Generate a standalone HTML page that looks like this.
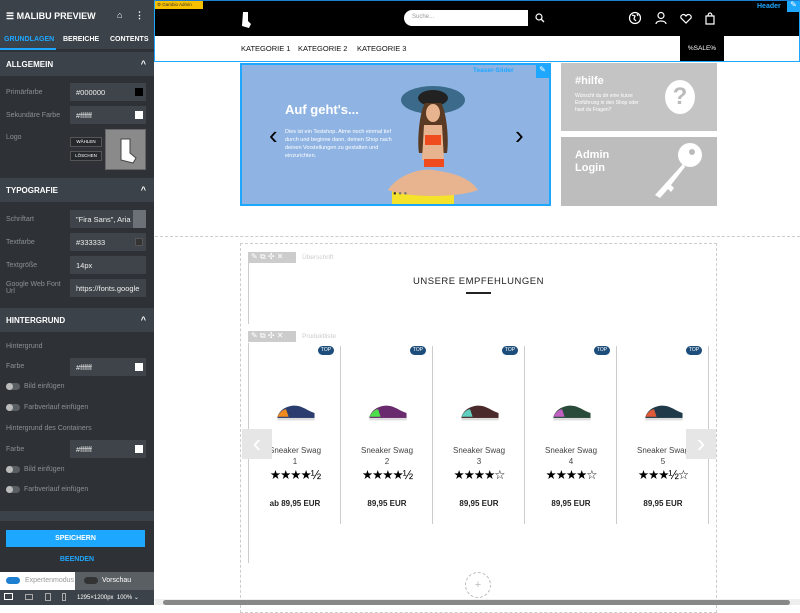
<!DOCTYPE html>
<html><head><meta charset="utf-8"><style>
*{box-sizing:border-box;margin:0;padding:0}
body{width:800px;height:605px;overflow:hidden;position:relative;background:#fff;font-family:"Liberation Sans",sans-serif}
.a{position:absolute}
#sb{left:0;top:0;width:154px;height:605px;background:#2e3236;color:#ddd;font-size:7px}
.hd{position:absolute;left:0;width:154px;height:24px;background:#3c4249;color:#fff;font-weight:bold;font-size:8px;padding:8px 6px}
.hd:after{content:"^";position:absolute;right:8px;top:7px;font-size:9px}
.lb{position:absolute;left:6px;color:#8a9096;font-size:7px}
.in{position:absolute;left:70px;width:76px;height:18px;background:#3e4449;color:#eee;font-size:7.5px;padding:5px 6px}
.sw{position:absolute;right:3px;top:5px;width:8px;height:8px}
.tg{position:absolute;left:6px;width:14px;height:7px;border-radius:4px;background:#5a5f64}
.tg:before{content:"";position:absolute;left:0;top:0;width:7px;height:7px;border-radius:50%;background:#bbb}
.tgl{position:absolute;left:24px;color:#8a9096;font-size:7px}
.pc{position:absolute;top:346px;width:92px;height:178px;border-right:1px solid #ccc;text-align:center;font-family:"Liberation Sans",sans-serif}
.top{position:absolute;right:6px;top:0;width:16px;height:9px;border-radius:5px;background:#1d4e7b;color:#fff;font-size:5px;line-height:9px}
.shoe{position:absolute;left:26px;top:56px;width:42px;height:22px}
.nm{position:absolute;left:0;width:92px;top:99px;font-size:8px;color:#444;line-height:11px}
.st{position:absolute;left:0;width:92px;top:121px;font-size:12.5px;color:#000;letter-spacing:-1px}
.pr{position:absolute;left:0;width:92px;top:153px;font-size:8px;font-weight:bold;color:#222}
.tb{position:absolute;width:48px;height:11px;background:#ccc}
</style></head><body>
<div id="sb" class="a">
 <div class="a" style="left:0;top:0;width:154px;height:32px;background:#3c4249"></div>
 <div class="a" style="left:6px;top:11px;color:#fff;font-weight:bold;font-size:9px">☰ MALIBU PREVIEW</div>
 <div class="a" style="left:117px;top:10px;color:#fff;font-size:9px">⌂</div>
 <div class="a" style="left:135px;top:10px;color:#fff;font-size:9px;font-weight:bold">⋮</div>
 <div class="a" style="left:0;top:32px;width:154px;height:17px;background:#3c4249"></div>
 <div class="a" style="left:4px;top:36px;color:#1ea7ff;font-weight:bold;font-size:7px">GRUNDLAGEN</div>
 <div class="a" style="left:63px;top:36px;color:#fff;font-weight:bold;font-size:7px">BEREICHE</div>
 <div class="a" style="left:110px;top:36px;color:#fff;font-weight:bold;font-size:7px">CONTENTS</div>
 <div class="a" style="left:0;top:48px;width:56px;height:2px;background:#1ea7ff"></div>
 <div class="hd" style="top:52px">ALLGEMEIN</div>
 <div class="lb" style="top:89px">Primärfarbe</div><div class="in" style="top:83px">#000000<span class="sw" style="background:#000"></span></div>
 <div class="lb" style="top:112px">Sekundäre Farbe</div><div class="in" style="top:106px">#ffffff<span class="sw" style="background:#fff"></span></div>
 <div class="lb" style="top:134px">Logo</div>
 <div class="a" style="left:70px;top:137px;width:32px;height:10px;border:1px solid #555;background:#25292c;font-size:4.5px;color:#fff;text-align:center;line-height:8px">WÄHLEN</div>
 <div class="a" style="left:70px;top:151px;width:32px;height:10px;border:1px solid #555;background:#25292c;font-size:4.5px;color:#fff;text-align:center;line-height:8px">LÖSCHEN</div>
 <div class="a" style="left:105px;top:129px;width:41px;height:41px;background:#8a8a8a;border:1px solid #666"><svg width="41" height="41"><path d="M15 9h9v14l6 5-3 5-12-3z" fill="#fff" stroke="#444" stroke-width="1"/></svg></div>
 <div class="hd" style="top:178px">TYPOGRAFIE</div>
 <div class="lb" style="top:216px">Schriftart</div><div class="in" style="top:210px">"Fira Sans", Aria</div>
 <div class="a" style="left:133px;top:210px;width:13px;height:18px;background:#6b7177"></div>
 <div class="lb" style="top:239px">Textfarbe</div><div class="in" style="top:233px">#333333<span class="sw" style="background:#333;border:1px solid #555"></span></div>
 <div class="lb" style="top:262px">Textgröße</div><div class="in" style="top:256px">14px</div>
 <div class="lb" style="top:281px;line-height:7px">Google Web Font<br>Url</div><div class="in" style="top:279px">https://fonts.google</div>
 <div class="hd" style="top:308px">HINTERGRUND</div>
 <div class="lb" style="top:343px">Hintergrund</div>
 <div class="lb" style="top:363px">Farbe</div><div class="in" style="top:358px">#ffffff<span class="sw" style="background:#fff"></span></div>
 <div class="tg" style="top:383px"></div><div class="tgl" style="top:383px">Bild einfügen</div>
 <div class="tg" style="top:404px"></div><div class="tgl" style="top:404px">Farbverlauf einfügen</div>
 <div class="lb" style="top:425px">Hintergrund des Containers</div>
 <div class="lb" style="top:446px">Farbe</div><div class="in" style="top:440px">#ffffff<span class="sw" style="background:#fff"></span></div>
 <div class="tg" style="top:466px"></div><div class="tgl" style="top:466px">Bild einfügen</div>
 <div class="tg" style="top:486px"></div><div class="tgl" style="top:486px">Farbverlauf einfügen</div>
 <div class="a" style="left:0;top:511px;width:154px;height:10px;background:#3c4249"></div>
 <div class="a" style="left:6px;top:530px;width:139px;height:17px;background:#1ea7ff;color:#fff;font-weight:bold;font-size:7px;text-align:center;line-height:17px">SPEICHERN</div>
 <div class="a" style="left:0;top:556px;width:154px;text-align:center;color:#1ea7ff;font-weight:bold;font-size:7px">BEENDEN</div>
 <div class="a" style="left:0;top:572px;width:75px;height:18px;background:#fff"></div>
 <div class="a" style="left:75px;top:572px;width:79px;height:18px;background:#5a5f64"></div>
 <div class="a" style="left:6px;top:577px;width:14px;height:7px;border-radius:4px;background:#1e7fd0"></div>
 <div class="a" style="left:25px;top:577px;color:#999;font-size:7px">Expertenmodus</div>
 <div class="a" style="left:84px;top:577px;width:14px;height:7px;border-radius:4px;background:#333"></div>
 <div class="a" style="left:102px;top:577px;color:#fff;font-size:7px">Vorschau</div>
 <div class="a" style="left:0;top:590px;width:154px;height:15px;background:#3c4249"></div>
 <div class="a" style="left:4px;top:593px;width:9px;height:7px;border:1.5px solid #fff"></div>
 <div class="a" style="left:25px;top:594px;width:8px;height:6px;border:1px solid #aaa"></div>
 <div class="a" style="left:45px;top:593px;width:6px;height:8px;border:1px solid #aaa"></div>
 <div class="a" style="left:62px;top:593px;width:4px;height:8px;border:1px solid #aaa"></div>
 <div class="a" style="left:77px;top:594px;color:#fff;font-size:6px">1295×1200px&nbsp; 100% ⌄</div>
</div>

<div class="a" style="left:155px;top:0;width:645px;height:36px;background:#000"></div>
<div class="a" style="left:155px;top:0;width:48px;height:9px;background:#f5c000;font-size:4.5px;color:#333;padding:2px">⚙ Gambio Admin</div>
<svg class="a" style="left:240px;top:12px" width="12" height="16"><path d="M3 0h5v9l3 3-2 4-7-2z" fill="#fff"/></svg>
<div class="a" style="left:404px;top:10px;width:124px;height:16px;background:#fff;border-radius:8px 0 0 8px;font-size:6px;color:#999;padding:4px 8px">Suche...</div>
<svg class="a" style="left:535px;top:13px" width="10" height="10"><circle cx="4" cy="4" r="3" stroke="#fff" fill="none" stroke-width="1.2"/><path d="M6 6l3 3" stroke="#fff" stroke-width="1.3"/></svg>
<svg class="a" style="left:628px;top:11px" width="90" height="14" fill="none" stroke="#fff" stroke-width="1.2"><circle cx="7" cy="7" r="5.5"/><path d="M4 4l3 1-1 3 2 2M9 3l1 2" /><circle cx="33" cy="4.5" r="3"/><path d="M28 13c0-4 10-4 10 0"/><path d="M58 5c-2-3-6-1-5 2l5 5 5-5c1-3-3-5-5-2z"/><path d="M78 5h8v8h-8zM80 5c0-4 4-4 4 0"/></svg>
<div class="a" style="left:757px;top:3px;color:#1ea7ff;font-size:7px;font-weight:bold">Header</div>
<div class="a" style="left:787px;top:0;width:13px;height:12px;background:#1ea7ff;color:#fff;font-size:8px;text-align:center">✎</div>
<div class="a" style="left:155px;top:36px;width:645px;height:26px;background:#fff"></div>
<div class="a" style="left:241px;top:44px;font-size:7.5px;color:#111">KATEGORIE 1</div>
<div class="a" style="left:298px;top:44px;font-size:7.5px;color:#111">KATEGORIE 2</div>
<div class="a" style="left:357px;top:44px;font-size:7.5px;color:#111">KATEGORIE 3</div>
<div class="a" style="left:680px;top:36px;width:44px;height:25px;background:#000;color:#fff;font-size:6.5px;text-align:center;line-height:25px">%SALE%</div>
<div class="a" style="left:154px;top:0;width:646px;height:62px;border:1.5px solid #1ea7ff;border-top-color:#1e7fd0"></div>

<div class="a" style="left:240px;top:63px;width:311px;height:143px;background:#8fb4e3;border:2px solid #1ea7ff;overflow:hidden">
 <div class="a" style="left:150px;top:122px;width:62px;height:21px;background:#f5e22a"></div>
 <svg class="a" style="left:136px;top:20px" width="110" height="122"><ellipse cx="55" cy="15" rx="32" ry="14" fill="#3b6a8a"/><ellipse cx="55" cy="13" rx="15" ry="8" fill="#222"/><path d="M47 18c-6 10-8 40-6 50h28c2-12 0-40-6-50z" fill="#5a3a22"/><ellipse cx="55" cy="28" rx="7" ry="9" fill="#e8b48f"/><path d="M46 40h18l2 35H44z" fill="#e8b48f"/><path d="M47 50h16v10H47zM46 74h20v8H46z" fill="#f04a1f"/><path d="M10 105c10-15 32-22 45-20s35 5 45 20c-20 8-70 8-90 0z" fill="#e8b48f"/></svg>
 <div class="a" style="left:43px;top:37px;color:#fff;font-weight:bold;font-size:13px">Auf geht's...</div>
 <div class="a" style="left:43px;top:63px;color:#fff;font-size:5.5px;line-height:8px;width:120px">Dies ist ein Testshop. Atme noch einmal tief durch und beginne dann, deinen Shop nach deinen Vorstellungen zu gestalten und einzurichten.</div>
 <div class="a" style="left:27px;top:55px;font-size:26px;color:#000">‹</div>
 <div class="a" style="left:273px;top:55px;font-size:26px;color:#000">›</div>
 <div class="a" style="left:231px;top:2px;color:#1ea7ff;font-size:6.5px;font-weight:bold">Teaser-Slider</div>
 <div class="a" style="left:294px;top:0;width:13px;height:13px;background:#1ea7ff;color:#fff;font-size:8px;text-align:center">✎</div>
 <div class="a" style="left:151px;top:126px;font-size:6px;color:#333">● <span style="color:#777">● ●</span></div>
</div>
<div class="a" style="left:561px;top:63px;width:156px;height:68px;background:#c4c4c4"></div>
<div class="a" style="left:575px;top:75px;color:#fff;font-weight:bold;font-size:11px">#hilfe</div>
<div class="a" style="left:575px;top:93px;width:70px;color:#fff;font-size:5px;line-height:7px">Wünscht du dir eine kurze Einführung in den Shop oder hast du Fragen?</div>
<div class="a" style="left:665px;top:80px;width:30px;height:34px;border-radius:50%;background:#fff;color:#bbb;font-weight:bold;font-size:24px;text-align:center;line-height:34px">?</div>
<div class="a" style="left:561px;top:137px;width:156px;height:69px;background:#bdbdbd"></div>
<div class="a" style="left:575px;top:149px;color:#fff;font-weight:bold;font-size:11px;line-height:13px">Admin<br>Login</div>
<svg class="a" style="left:645px;top:140px" width="65" height="60"><circle cx="45" cy="15" r="12" fill="#fff"/><circle cx="47" cy="12" r="3" fill="#bbb"/><path d="M38 24L10 55l5 3 8-9 3 3 3-4-3-3 14-18z" fill="#fff"/></svg>

<div class="a" style="left:155px;top:236px;width:645px;border-top:1px dashed #ccc"></div>
<div class="a" style="left:240px;top:243px;width:477px;height:370px;border:1px dashed #ccc"></div>
<div class="a" style="left:248px;top:252px;width:1px;height:72px;background:#ccc"></div>
<div class="tb" style="left:248px;top:252px"></div>
<div class="a" style="left:251px;top:252px;font-size:8px;color:#fff">✎ ⧉ ✣ ✕</div>
<div class="a" style="left:302px;top:254px;font-size:6.5px;color:#ccc">Überschrift</div>
<div class="a" style="left:240px;top:276px;width:477px;text-align:center;font-size:9.5px;color:#222;letter-spacing:0.5px">UNSERE EMPFEHLUNGEN</div>
<div class="a" style="left:466px;top:292px;width:25px;height:1.5px;background:#222"></div>
<div class="tb" style="left:248px;top:331px"></div>
<div class="a" style="left:251px;top:331px;font-size:8px;color:#fff">✎ ⧉ ✣ ✕</div>
<div class="a" style="left:302px;top:333px;font-size:6.5px;color:#ccc">Produktliste</div>
<div class="a" style="left:248px;top:343px;width:1px;height:220px;background:#ccc"></div>

<div class="pc" style="left:249px"><span class="top">TOP</span><svg class="shoe" viewBox="0 0 34 14"><path d="M2 10c2-6 8-9 14-9 6 0 10 4 16 6v5H2z" fill="#2a3d6e"/><path d="M2 10c2-4 5-6 7-6l2 6z" fill="#f08a1c"/><rect x="2" y="11" width="30" height="2" fill="#ddd"/></svg><div class="nm">Sneaker Swag<br>1</div><div class="st">★★★★½</div><div class="pr">ab 89,95 EUR</div></div>
<div class="pc" style="left:341px"><span class="top">TOP</span><svg class="shoe" viewBox="0 0 34 14"><path d="M2 10c2-6 8-9 14-9 6 0 10 4 16 6v5H2z" fill="#6a2a6e"/><path d="M2 10c2-4 5-6 7-6l2 6z" fill="#4ee04a"/><rect x="2" y="11" width="30" height="2" fill="#ddd"/></svg><div class="nm">Sneaker Swag<br>2</div><div class="st">★★★★½</div><div class="pr">89,95 EUR</div></div>
<div class="pc" style="left:433px"><span class="top">TOP</span><svg class="shoe" viewBox="0 0 34 14"><path d="M2 10c2-6 8-9 14-9 6 0 10 4 16 6v5H2z" fill="#4a2a2a"/><path d="M2 10c2-4 5-6 7-6l2 6z" fill="#5fd0c0"/><rect x="2" y="11" width="30" height="2" fill="#ddd"/></svg><div class="nm">Sneaker Swag<br>3</div><div class="st">★★★★☆</div><div class="pr">89,95 EUR</div></div>
<div class="pc" style="left:525px"><span class="top">TOP</span><svg class="shoe" viewBox="0 0 34 14"><path d="M2 10c2-6 8-9 14-9 6 0 10 4 16 6v5H2z" fill="#2a4a3a"/><path d="M2 10c2-4 5-6 7-6l2 6z" fill="#c060c0"/><rect x="2" y="11" width="30" height="2" fill="#ddd"/></svg><div class="nm">Sneaker Swag<br>4</div><div class="st">★★★★☆</div><div class="pr">89,95 EUR</div></div>
<div class="pc" style="left:617px"><span class="top">TOP</span><svg class="shoe" viewBox="0 0 34 14"><path d="M2 10c2-6 8-9 14-9 6 0 10 4 16 6v5H2z" fill="#203a4a"/><path d="M2 10c2-4 5-6 7-6l2 6z" fill="#e05a3a"/><rect x="2" y="11" width="30" height="2" fill="#ddd"/></svg><div class="nm">Sneaker Swag<br>5</div><div class="st">★★★½☆</div><div class="pr">89,95 EUR</div></div>

<div class="a" style="left:242px;top:429px;width:30px;height:30px;background:#e6e6e6;color:#fff;font-size:26px;text-align:center;line-height:28px">‹</div>
<div class="a" style="left:686px;top:429px;width:30px;height:30px;background:#e6e6e6;color:#fff;font-size:26px;text-align:center;line-height:28px">›</div>
<div class="a" style="left:465px;top:572px;width:26px;height:26px;border:1px dashed #bbb;border-radius:50%;color:#bbb;text-align:center;line-height:24px;font-size:11px">+</div>
<div class="a" style="left:155px;top:599px;width:645px;height:6px;background:#eee"></div>
<div class="a" style="left:163px;top:600px;width:627px;height:5px;background:#888;border-radius:3px"></div>
</body></html>
